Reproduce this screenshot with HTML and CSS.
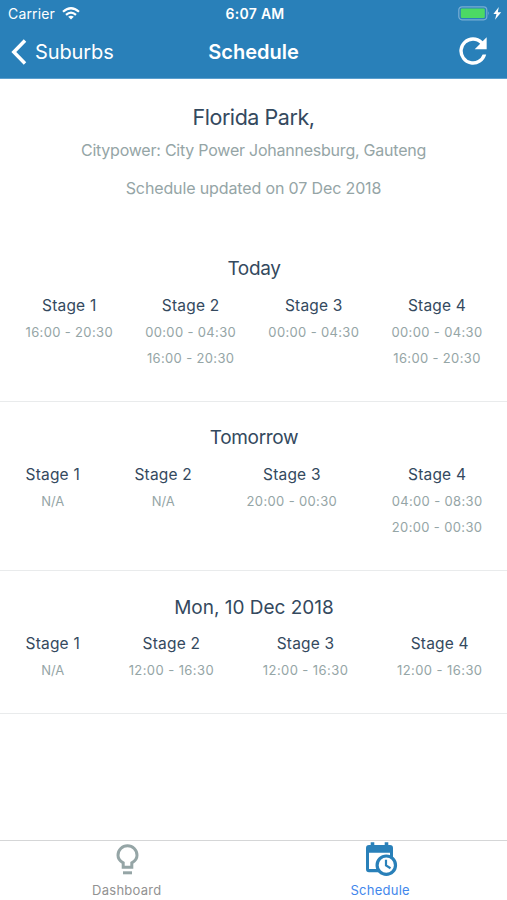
FILE: index.html
```html
<!DOCTYPE html>
<html lang="en">
<head>
<meta charset="utf-8">
<title>Schedule</title>
<link rel="stylesheet" href="styles.css">
</head>
<body>
<header class="header">
  <div class="status">
    <div class="carrier"><span>Carrier</span>
      <svg class="wifi" width="18" height="13" viewBox="0 0 18 13" fill="none" stroke="#fff" stroke-width="2.2"><path d="M1 4.8Q9-2.3 17 4.8M4 7.8Q9 3.4 14 7.8"/><path d="M6.2 9.8Q9 7.7 11.8 9.8L9 12.6Z" fill="#fff" stroke="none"/></svg>
    </div>
    <span class="clock">6:07 AM</span>
    <div class="power">
      <svg width="44" height="15" viewBox="0 0 44 15"><rect x=".8" y=".8" width="28" height="13" rx="3.2" fill="none" stroke="#78add4" stroke-width="1.2"/><rect x="2.8" y="2.6" width="24" height="9.4" rx="1.2" fill="#4cd964"/><path d="M30.3 5.2q1.8 2 0 4.2z" fill="#78add4"/><path d="M40.8 1 35.4 8.1h3.1L37 13.8l6.2-7.6h-3.4z" fill="#fff"/></svg>
    </div>
  </div>
  <nav class="nav">
    <a class="back"><svg width="16" height="26" viewBox="0 0 16 26" fill="none" stroke="#fff" stroke-width="3.5"><path d="M14 1.5 2.8 13 14 24.5"/></svg><span>Suburbs</span></a>
    <h1>Schedule</h1>
    <a class="refresh"><svg width="28" height="28" viewBox="3.8 3.8 16.4 16.4"><path d="M17.65 6.35A7.96 7.96 0 0 0 12 4a8 8 0 1 0 7.73 10h-2.08A6 6 0 1 1 12 6c1.66 0 3.14.69 4.22 1.78L13 11h7V4z" fill="#fff"/></svg></a>
  </nav>
</header>
<main>
  <section class="place">
    <h2>Florida Park,</h2>
    <p class="provider">Citypower: City Power Johannesburg, Gauteng</p>
    <p class="updated">Schedule updated on 07 Dec 2018</p>
  </section>
  <section class="day">
    <h3 class="today">Today</h3>
    <div class="stages">
      <div class="stage"><h4>Stage 1</h4><p>16:00 - 20:30</p></div>
      <div class="stage"><h4>Stage 2</h4><p>00:00 - 04:30</p><p>16:00 - 20:30</p></div>
      <div class="stage"><h4>Stage 3</h4><p>00:00 - 04:30</p></div>
      <div class="stage"><h4>Stage 4</h4><p>00:00 - 04:30</p><p>16:00 - 20:30</p></div>
    </div>
  </section>
  <section class="day">
    <h3 class="tomorrow">Tomorrow</h3>
    <div class="stages">
      <div class="stage"><h4>Stage 1</h4><p class="na">N/A</p></div>
      <div class="stage"><h4>Stage 2</h4><p class="na">N/A</p></div>
      <div class="stage"><h4>Stage 3</h4><p>20:00 - 00:30</p></div>
      <div class="stage"><h4>Stage 4</h4><p>04:00 - 08:30</p><p>20:00 - 00:30</p></div>
    </div>
  </section>
  <section class="day">
    <h3 class="date">Mon, 10 Dec 2018</h3>
    <div class="stages">
      <div class="stage"><h4>Stage 1</h4><p class="na">N/A</p></div>
      <div class="stage"><h4>Stage 2</h4><p class="noon">12:00 - 16:30</p></div>
      <div class="stage"><h4>Stage 3</h4><p class="noon">12:00 - 16:30</p></div>
      <div class="stage"><h4>Stage 4</h4><p class="noon">12:00 - 16:30</p></div>
    </div>
  </section>
</main>
<footer class="tabs">
  <a class="tab">
    <svg width="36" height="36" viewBox="0 0 36 36" fill="none" stroke="#95a5a6" stroke-width="3"><path d="M14.2 26.2v-4.3C11 20.100 9 17.400 9 14.200A9.500 9.500 0 0 1 28 14.200c0 3.200-2 5.900-5.200 7.700v4.300z"/><path d="M14 31.800h9"/></svg>
    <span>Dashboard</span>
  </a>
  <a class="tab active">
    <svg width="36" height="36" viewBox="0 0 36 36"><path d="M7 4h1.700V1.300h3.600V4h10.400V1.300h3.600V4H28q3 0 3 3v9h-3v-4.200H7V28h11v3.200H7q-3 0-3-3V7q0-3 3-3z" fill="#2980b9"/><circle cx="24.300" cy="24.200" r="9.200" fill="#fff" stroke="#2980b9" stroke-width="3.200"/><path d="M24 18.800v5.700l4.500 2.700" fill="none" stroke="#2980b9" stroke-width="2.200"/></svg>
    <span>Schedule</span>
  </a>
</footer>
</body>
</html>
```
FILE: styles.css
```css
* { box-sizing: border-box; margin: 0; padding: 0; }
body {
  width: 507px; height: 900px; overflow: hidden;
  display: flex; flex-direction: column;
  background: #fff; color: #34495e;
  font-family: Inter, "Liberation Sans", sans-serif;
}
h1, h2, h3, h4 { font-weight: 400; }
svg { display: block; flex: none; }
.header { height: 79px; background: #2980b9; color: #fff; border-bottom: 1px solid #5b9fce; }
.status { height: 27px; display: grid; grid-template-columns: 1fr auto 1fr; align-items: center; padding: 0 5px 0 8px; }
.carrier { display: flex; align-items: center; gap: 7px; font-size: 14px; letter-spacing: .15px; }
.clock { font-size: 14px; font-weight: 600; letter-spacing: .3px; }
.power { display: flex; justify-content: flex-end; }
.nav { height: 50px; display: grid; grid-template-columns: 1fr auto 1fr; align-items: center; padding: 0 20px; }
.back { display: flex; align-items: center; gap: 8px; margin-left: -9px; font-size: 20px; letter-spacing: -.1px; }
.nav h1 { font-size: 20px; font-weight: 600; }
.refresh { display: flex; justify-content: flex-end; margin-top: -3px; }
main { flex: 1; text-align: center; }
.place { height: 154px; padding-top: 23px; }
.place h2 { font-size: 21.5px; line-height: 30px; letter-spacing: -.45px; }
.place p { font-size: 16px; line-height: 20px; color: #95a5a6; }
.place .provider { margin-top: 8px; letter-spacing: -.23px; }
.place .updated { margin-top: 18px; letter-spacing: -.13px; }
.day { padding: 22px 24.5px 30px 25.5px; border-bottom: 1px solid #e9ebec; }
.day h3 { font-size: 19px; line-height: 28px; }
.day .today, .day .tomorrow { letter-spacing: -.35px; }
.day .date { margin: 1px 0 -1px; }
.stages { display: flex; justify-content: space-between; margin-top: 13px; }
.stage h4 { font-size: 15.5px; line-height: 20px; margin-bottom: 3px; letter-spacing: .2px; }
.stage p { font-size: 13px; line-height: 26px; color: #95a5a6; letter-spacing: .35px; }
.stage .noon { letter-spacing: .42px; }
.stage .na { letter-spacing: 0; }
.tabs { height: 60px; display: flex; border-top: 1px solid #d5d6d7; }
.tab { flex: 1; display: flex; flex-direction: column; align-items: center; color: #929292; font-size: 13px; letter-spacing: .25px; }
.tab span { line-height: 20px; margin-top: 3px; }
.active { color: #4287ec; }
```
